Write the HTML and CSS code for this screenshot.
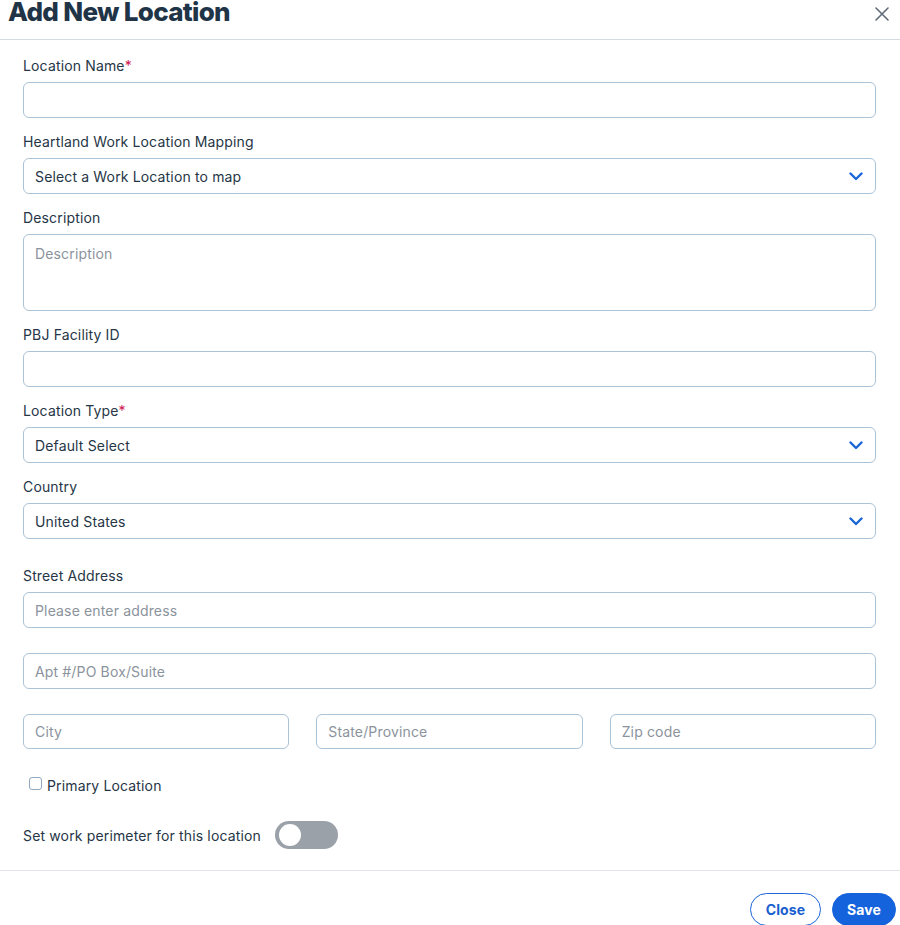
FILE: index.html
```html
<!DOCTYPE html>
<html>
<head>
<meta charset="utf-8">
<link rel="stylesheet" href="styles.css">
</head>
<body>
<div class="modal">
  <div class="header">
    <h1 class="title">Add New Location</h1>
    <button class="x-btn" aria-label="Close">
      <svg width="14" height="14" viewBox="0 0 14 14"><path d="M1 1 L13 13 M13 1 L1 13" stroke="#5f6b78" stroke-width="1.6" fill="none" stroke-linecap="round"/></svg>
    </button>
  </div>
  <div class="body">
    <div class="group">
      <label class="label">Location Name<span class="req">*</span></label>
      <div class="input"></div>
    </div>
    <div class="group">
      <label class="label">Heartland Work Location Mapping</label>
      <div class="input select"><span class="value">Select a Work Location to map</span><svg class="chev" width="14" height="9" viewBox="0 0 14 9"><path d="M1.5 1.5 L7 7 L12.5 1.5" stroke="#1a66d9" stroke-width="2.4" fill="none" stroke-linecap="round" stroke-linejoin="round"/></svg></div>
    </div>
    <div class="group">
      <label class="label">Description</label>
      <div class="input textarea"><span class="ph">Description</span></div>
    </div>
    <div class="group">
      <label class="label">PBJ Facility ID</label>
      <div class="input"></div>
    </div>
    <div class="group">
      <label class="label">Location Type<span class="req">*</span></label>
      <div class="input select"><span class="value">Default Select</span><svg class="chev" width="14" height="9" viewBox="0 0 14 9"><path d="M1.5 1.5 L7 7 L12.5 1.5" stroke="#1a66d9" stroke-width="2.4" fill="none" stroke-linecap="round" stroke-linejoin="round"/></svg></div>
    </div>
    <div class="group">
      <label class="label">Country</label>
      <div class="input select"><span class="value">United States</span><svg class="chev" width="14" height="9" viewBox="0 0 14 9"><path d="M1.5 1.5 L7 7 L12.5 1.5" stroke="#1a66d9" stroke-width="2.4" fill="none" stroke-linecap="round" stroke-linejoin="round"/></svg></div>
    </div>
    <div class="group address">
      <label class="label">Street Address</label>
      <div class="input"><span class="ph">Please enter address</span></div>
      <div class="input"><span class="ph">Apt #/PO Box/Suite</span></div>
      <div class="row3">
        <div class="input"><span class="ph">City</span></div>
        <div class="input"><span class="ph">State/Province</span></div>
        <div class="input"><span class="ph">Zip code</span></div>
      </div>
    </div>
    <div class="check-row">
      <span class="checkbox"></span>
      <span class="check-label">Primary Location</span>
    </div>
    <div class="toggle-row">
      <span class="toggle-label">Set work perimeter for this location</span>
      <span class="toggle"><span class="knob"></span></span>
    </div>
  </div>
  <div class="footer">
    <button class="btn btn-outline">Close</button>
    <button class="btn btn-primary">Save</button>
  </div>
</div>
</body>
</html>
```
FILE: styles.css
```css
* { box-sizing: border-box; }
html, body { margin: 0; padding: 0; background: #fff; }
body {
  font-family: Inter, "Noto Sans", sans-serif;
  color: #263646;
  letter-spacing: 0.15px;
  overflow: hidden;
}
.modal { width: 900px; }
.header {
  height: 40px;
  border-bottom: 1px solid #d3dae1;
  display: flex;
  justify-content: space-between;
  align-items: flex-start;
  padding: 0 11px 0 8px;
}
.title {
  margin: -3px 0 0 0;
  font-size: 26px;
  line-height: 30px;
  font-weight: 800;
  letter-spacing: -0.7px;
  color: #1f3447;
}
.x-btn {
  border: none;
  background: none;
  padding: 0;
  margin-top: 7px;
  width: 14px;
  height: 14px;
  display: flex;
}
.body {
  padding: 16px 24px 0 23px;
}
.group { display: flex; flex-direction: column; margin-bottom: 14px; }
.label {
  font-size: 14px;
  line-height: 20px;
  margin-bottom: 6px;
  color: #263646;
}
.req { color: #d1134f; }
.input {
  height: 36px;
  border: 1px solid #aac3d8;
  border-radius: 6px;
  display: flex;
  align-items: center;
  padding: 0 11px;
  font-size: 14px;
  color: #263646;
}
.select { justify-content: space-between; padding-right: 12px; }
.ph { color: #8b939c; }
.textarea { height: 77px; align-items: flex-start; padding-top: 10px; }
.chev { display: block; }
.address { margin-top: 27px; }
.address .input { margin-bottom: 25px; }
.row3 { display: flex; gap: 27px; }
.row3 .input { flex: 1; height: 35px; margin-bottom: 0; }
.check-row {
  display: flex;
  align-items: center;
  margin: 26px 0 0 6px;
  height: 20px;
}
.checkbox {
  width: 13px;
  height: 13px;
  border: 1px solid #8ea8c0;
  border-radius: 3px;
  margin-right: 5px;
  margin-top: -3px;
}
.check-label { font-size: 14px; }
.toggle-row {
  display: flex;
  align-items: center;
  margin-top: 26px;
  height: 28px;
}
.toggle-label { font-size: 14px; margin-right: 14px; }
.toggle {
  width: 63px;
  height: 28px;
  border-radius: 14px;
  background: #9ba1a9;
  display: flex;
  align-items: center;
  padding-left: 4px;
}
.knob {
  width: 22px;
  height: 22px;
  border-radius: 50%;
  background: #fff;
}
.footer {
  margin-top: 21px;
  border-top: 1px solid #e1e4e8;
  display: flex;
  justify-content: flex-end;
  gap: 11px;
  padding: 22px 4px 0 0;
}
.btn {
  height: 33px;
  border-radius: 17px;
  font-family: Inter, "Noto Sans", sans-serif;
  font-size: 14px;
  font-weight: 700;
  letter-spacing: 0.15px;
  padding: 0;
}
.btn-outline {
  width: 71px;
  background: #fff;
  border: 1px solid #1a66d9;
  color: #1a5fcf;
}
.btn-primary {
  width: 64px;
  background: #1463dc;
  border: 1px solid #1463dc;
  color: #fff;
}
```
